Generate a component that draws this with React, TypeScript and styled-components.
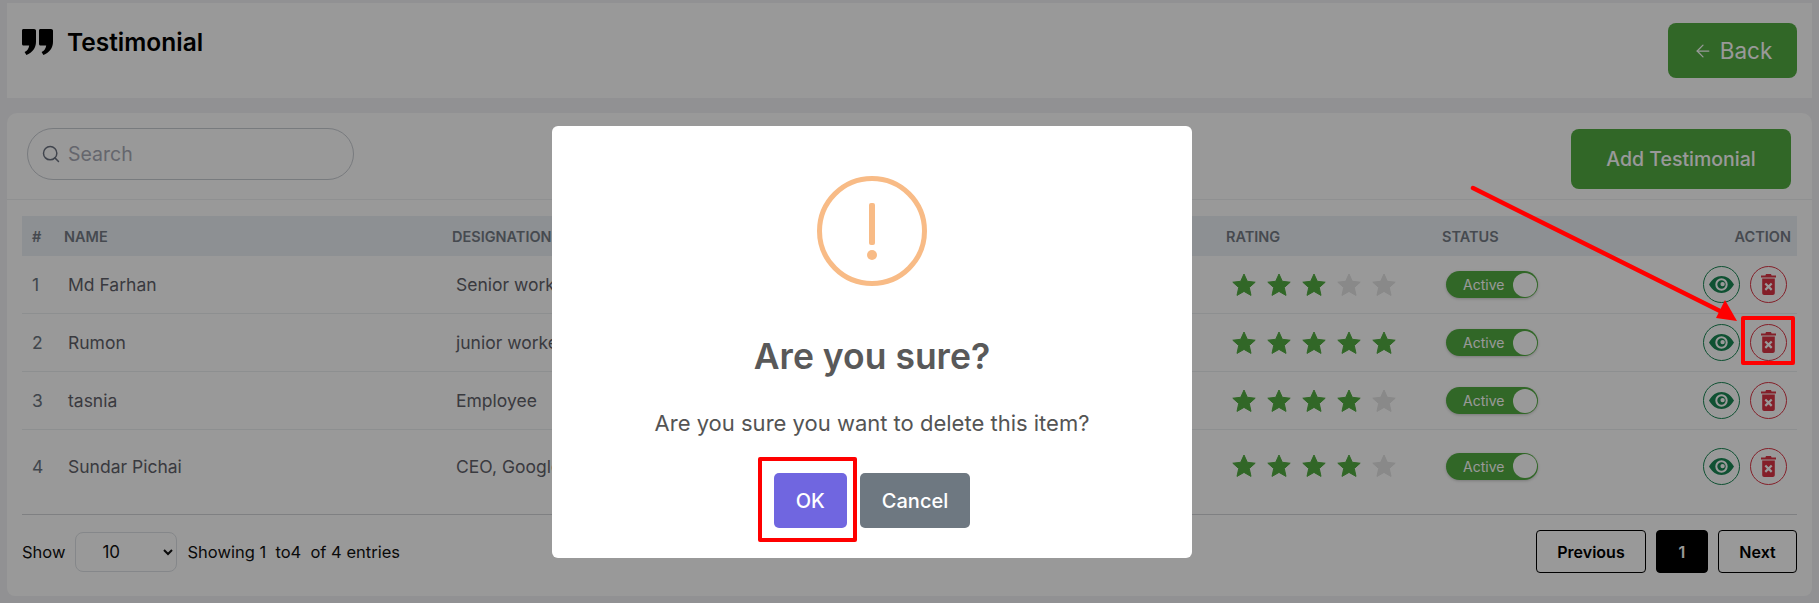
import styled, { createGlobalStyle } from 'styled-components';
import { ArrowLeft, Search } from 'lucide-react';

const GlobalStyle = createGlobalStyle`
  html, body {
    margin: 0;
    padding: 0;
    height: 603px;
    overflow: hidden;
    background: #f2f2f5;
    font-family: Inter, "Liberation Sans", sans-serif;
  }
  * { box-sizing: border-box; }
`;

const Page = styled.div`
  width: 1819px;
  height: 603px;
  padding: 3px 7px 0;
  display: flex;
  flex-direction: column;
  gap: 15px;
`;

const HeaderCard = styled.div`
  height: 95px;
  background: #fff;
  padding: 20px 15px 0 15px;
  display: flex;
  justify-content: space-between;
  align-items: flex-start;
`;

const TitleRow = styled.div`
  display: flex;
  align-items: center;
  gap: 14px;
  padding-top: 6px;
`;

const PageTitle = styled.h1`
  margin: 0;
  font-size: 24.5px;
  line-height: 26px;
  font-weight: 600;
  color: #000;
`;

const GreenButton = styled.button`
  border: 0;
  border-radius: 8px;
  background: #52ac41;
  color: #fff;
  font-family: inherit;
  display: flex;
  align-items: center;
  justify-content: center;
`;

const BackButton = styled(GreenButton)`
  width: 129px;
  height: 55px;
  gap: 7px;
  font-size: 22.5px;
  font-weight: 400;
`;

const TableCard = styled.div`
  height: 483px;
  background: #fff;
  border-radius: 10px 10px 8px 8px;
  display: flex;
  flex-direction: column;
`;

const Toolbar = styled.div`
  height: 87px;
  flex: none;
  padding: 15px 21px 0 20px;
  display: flex;
  justify-content: space-between;
  align-items: flex-start;
  border-bottom: 1px solid #eef0f2;
`;

const SearchBox = styled.label`
  width: 327px;
  height: 52px;
  border: 1px solid #c9cdd3;
  border-radius: 26px;
  display: flex;
  align-items: center;
  gap: 5px;
  padding-left: 13px;
  color: #6b7280;
`;

const SearchInput = styled.input`
  border: 0;
  outline: 0;
  background: transparent;
  flex: 1;
  min-width: 0;
  font-family: inherit;
  font-size: 19.5px;
  &::placeholder {
    color: #a8abb6;
  }
`;

const AddButton = styled(GreenButton)`
  width: 220px;
  height: 60px;
  margin-top: 1px;
  font-size: 19.5px;
  font-weight: 500;
`;

const TableWrap = styled.div`
  padding: 16px 15px 0;
`;

const columns = '42px 388px 774px 216px 180px 1fr';

const HeadRow = styled.div`
  display: grid;
  grid-template-columns: ${columns};
  height: 40px;
  align-items: center;
  background: #ebf0f5;
`;

const HeadCell = styled.div<{ $right?: boolean }>`
  font-size: 14.5px;
  font-weight: 600;
  color: #767c85;
  white-space: nowrap;
  text-align: ${(p) => (p.$right ? 'right' : 'left')};
  padding-right: ${(p) => (p.$right ? '6px' : 0)};
  &:first-child {
    padding-left: 10px;
  }
`;

const BodyRow = styled.div<{ $height: number; $dropBy?: number; $strong?: boolean }>`
  display: grid;
  grid-template-columns: ${columns};
  height: ${(p) => p.$height}px;
  padding-bottom: ${(p) => p.$dropBy ?? 0}px;
  align-items: center;
  border-bottom: 1px solid ${(p) => (p.$strong ? '#d4d6d9' : '#eceef1')};
`;

const IndexCell = styled.div`
  padding-left: 10px;
  font-size: 17.5px;
  color: #6c7580;
`;

const TextCell = styled.div`
  padding-left: 4px;
  font-size: 17.5px;
  color: #5f626a;
  white-space: nowrap;
`;

const Stars = styled.div`
  display: flex;
  gap: 11px;
  padding-left: 6px;
`;

const StarIcon = styled.svg<{ $on: boolean }>`
  width: 24px;
  height: 24px;
  fill: ${(p) => (p.$on ? '#52ac41' : '#e4e4e4')};
  stroke: ${(p) => (p.$on ? '#52ac41' : '#e4e4e4')};
  stroke-width: 1;
  stroke-linejoin: round;
`;

const Toggle = styled.div`
  margin-left: 4px;
  width: 92px;
  height: 27px;
  border-radius: 14px;
  background: #52ac41;
  color: #fff;
  font-size: 14px;
  display: flex;
  align-items: center;
  justify-content: space-between;
  padding: 0 1.5px 0 17px;
  box-shadow: 0 1px 3px rgba(0, 0, 0, 0.2);
`;

const Knob = styled.span`
  width: 24px;
  height: 24px;
  border-radius: 50%;
  background: #fff;
`;

const Actions = styled.div`
  display: flex;
  justify-content: flex-end;
  gap: 10.5px;
  padding-right: 10px;
`;

const RoundAction = styled.button<{ $color: string }>`
  width: 37px;
  height: 37px;
  padding: 0;
  border-radius: 50%;
  background: transparent;
  border: 1px solid ${(p) => p.$color};
  color: ${(p) => p.$color};
  display: flex;
  align-items: center;
  justify-content: center;
`;

const Footer = styled.div`
  padding: 15px 15px 0;
  display: flex;
  justify-content: space-between;
  align-items: center;
`;

const Entries = styled.div`
  display: flex;
  align-items: center;
  gap: 10px;
  font-size: 16.5px;
  color: #111;
  white-space: pre;
`;

const PageSizeSelect = styled.select`
  width: 102px;
  height: 40px;
  padding: 0 16px 0 22px;
  border: 1px solid #dee2e6;
  border-radius: 8px;
  background: transparent;
  font-family: inherit;
  font-size: 17px;
  color: #111;
`;

const Pagination = styled.div`
  display: flex;
  gap: 10px;
`;

const PageButton = styled.button<{ $active?: boolean; $width: number }>`
  width: ${(p) => p.$width}px;
  height: 43px;
  border: 1px solid #000;
  border-radius: 4px;
  background: ${(p) => (p.$active ? '#000' : 'transparent')};
  color: ${(p) => (p.$active ? '#fff' : '#000')};
  font-family: inherit;
  font-size: 16px;
  font-weight: 600;
`;

const Overlay = styled.div`
  position: fixed;
  inset: 0;
  background: rgba(0, 0, 0, 0.4);
`;

const Modal = styled.div`
  position: absolute;
  left: 552px;
  top: 126px;
  width: 640px;
  height: 432px;
  background: #fff;
  border-radius: 6px;
  display: flex;
  flex-direction: column;
  align-items: center;
  padding-top: 50px;
`;

const WarningIcon = styled.div`
  width: 110px;
  height: 110px;
  border-radius: 50%;
  border: 5px solid #f8bb86;
  display: flex;
  flex-direction: column;
  align-items: center;
  padding-top: 22px;
`;

const WarningStem = styled.span`
  width: 6px;
  height: 42px;
  background: #f8bb86;
  border-radius: 2px;
`;

const WarningDot = styled.span`
  width: 10px;
  height: 10px;
  margin-top: 5px;
  border-radius: 50%;
  background: #f8bb86;
`;

const ModalTitle = styled.h2`
  margin: 48px 0 0;
  font-size: 35.5px;
  line-height: 45px;
  font-weight: 600;
  color: #595959;
`;

const ModalText = styled.p`
  margin: 30px 0 0;
  font-size: 22px;
  line-height: 28px;
  font-weight: 400;
  color: #545454;
`;

const ModalActions = styled.div`
  margin-top: 36px;
  display: flex;
  gap: 13px;
`;

const ModalButton = styled.button<{ $color: string }>`
  height: 55px;
  padding: 0 22px;
  border: 0;
  border-radius: 5px;
  background: ${(p) => p.$color};
  color: #fff;
  font-family: inherit;
  font-size: 20px;
  font-weight: 500;
`;

const Callout = styled.div<{ $x: number; $y: number; $w: number; $h: number }>`
  position: absolute;
  left: ${(p) => p.$x}px;
  top: ${(p) => p.$y}px;
  width: ${(p) => p.$w}px;
  height: ${(p) => p.$h}px;
  border: 4px solid #f00;
  border-radius: 2px;
`;

const ArrowLayer = styled.svg`
  position: absolute;
  left: 0;
  top: 0;
  width: 1819px;
  height: 603px;
`;

const QuoteIcon = () => (
  <svg width="31" height="26" viewBox="0 0 31 26" fill="#000">
    <path d="M1.500 0h10.600c1 0 1.900.8 1.900 1.800v11c0 6-3.400 10.800-9.600 13.200L2.600 23c2.600-1.300 4.300-3.600 4.600-6.600H1.500c-.9 0-1.500-.7-1.500-1.500V1.600C0 .7.6 0 1.500 0z" />
    <path d="M18.500 0h10.600c1 0 1.900.8 1.900 1.800v11c0 6-3.400 10.800-9.600 13.200L19.600 23c2.600-1.300 4.300-3.600 4.600-6.600h-5.700c-.9 0-1.500-.7-1.500-1.500V1.600C17 .7 17.600 0 18.500 0z" />
  </svg>
);

const EyeIcon = () => (
  <svg width="25" height="17" viewBox="0 0 25 17" fill="currentColor" fillRule="evenodd">
    <path d="M0 8.500C3.400 2.800 7.600 0 12.500 0S21.600 2.800 25 8.500C21.600 14.200 17.400 17 12.500 17S3.400 14.200 0 8.500zM12.500 2.300a6.200 6.200 0 1 0 0 12.400 6.200 6.200 0 0 0 0-12.400z" />
    <path d="M12.500 4.300a4.200 4.200 0 1 1 0 8.400 4.200 4.200 0 0 1 0-8.400zM13.600 5.900a2.200 2.200 0 1 0 0 4.400 2.200 2.200 0 0 0 0-4.400z" />
  </svg>
);

const TrashIcon = () => (
  <svg width="15" height="21" viewBox="0 0 15 21">
    <path fill="currentColor" d="M5 0h5l.6 1.500H15v2H0v-2h4.400zM1.200 4.500h12.600V19c0 1.100-.8 2-1.900 2H3.100c-1.100 0-1.900-.9-1.900-2z" />
    <path stroke="#fff" strokeWidth="2.200" d="M4.300 9.500l6.400 6.400M10.700 9.500l-6.400 6.400" />
  </svg>
);

const Star = ({ on }: { on: boolean }) => (
  <StarIcon $on={on} viewBox="0 0 24 24">
    <polygon points="12,1 15.300,8.300 23.200,9.200 17.300,14.500 19,22.400 12,18.400 5,22.400 6.700,14.500 0.800,9.200 8.700,8.300" />
  </StarIcon>
);

const testimonials = [
  { name: 'Md Farhan', role: 'Senior worker', rating: 3, height: 58 },
  { name: 'Rumon', role: 'junior worker', rating: 5, height: 58 },
  { name: 'tasnia', role: 'Employee', rating: 4, height: 58 },
  { name: 'Sundar Pichai', role: 'CEO, Google', rating: 4, height: 85, dropBy: 12, strong: true },
];

export default function App() {
  return (
    <>
      <GlobalStyle />
      <Page>
        <HeaderCard>
          <TitleRow>
            <QuoteIcon />
            <PageTitle>Testimonial</PageTitle>
          </TitleRow>
          <BackButton>
            <ArrowLeft size={20} strokeWidth={1.5} />
            Back
          </BackButton>
        </HeaderCard>

        <TableCard>
          <Toolbar>
            <SearchBox>
              <Search size={20} strokeWidth={1.75} />
              <SearchInput placeholder="Search" />
            </SearchBox>
            <AddButton>Add Testimonial</AddButton>
          </Toolbar>

          <TableWrap>
            <HeadRow>
              <HeadCell>#</HeadCell>
              <HeadCell>NAME</HeadCell>
              <HeadCell>DESIGNATION</HeadCell>
              <HeadCell>RATING</HeadCell>
              <HeadCell>STATUS</HeadCell>
              <HeadCell $right>ACTION</HeadCell>
            </HeadRow>
            {testimonials.map((item, idx) => (
              <BodyRow key={item.name} $height={item.height} $dropBy={item.dropBy} $strong={item.strong}>
                <IndexCell>{idx + 1}</IndexCell>
                <TextCell>{item.name}</TextCell>
                <TextCell>{item.role}</TextCell>
                <Stars>
                  {[1, 2, 3, 4, 5].map((n) => (
                    <Star key={n} on={n <= item.rating} />
                  ))}
                </Stars>
                <Toggle>
                  Active
                  <Knob />
                </Toggle>
                <Actions>
                  <RoundAction $color="#198754">
                    <EyeIcon />
                  </RoundAction>
                  <RoundAction $color="#dc3545">
                    <TrashIcon />
                  </RoundAction>
                </Actions>
              </BodyRow>
            ))}
          </TableWrap>

          <Footer>
            <Entries>
              Show
              <PageSizeSelect defaultValue="10">
                <option>10</option>
                <option>25</option>
                <option>50</option>
              </PageSizeSelect>
              Showing 1  to4  of 4 entries
            </Entries>
            <Pagination>
              <PageButton $width={110}>Previous</PageButton>
              <PageButton $width={52} $active>1</PageButton>
              <PageButton $width={79}>Next</PageButton>
            </Pagination>
          </Footer>
        </TableCard>
      </Page>

      <Overlay>
        <Modal>
          <WarningIcon>
            <WarningStem />
            <WarningDot />
          </WarningIcon>
          <ModalTitle>Are you sure?</ModalTitle>
          <ModalText>Are you sure you want to delete this item?</ModalText>
          <ModalActions>
            <ModalButton $color="#7066e0">OK</ModalButton>
            <ModalButton $color="#6e7881">Cancel</ModalButton>
          </ModalActions>
        </Modal>

        <Callout $x={758} $y={457} $w={99} $h={85} />
        <Callout $x={1741} $y={316} $w={54} $h={49} />
        <ArrowLayer viewBox="0 0 1819 603">
          <line x1="1473" y1="188" x2="1722" y2="312" stroke="#f00" strokeWidth="4.500" strokeLinecap="round" />
          <polygon points="1737,321 1716,318 1725,300" fill="#f00" />
        </ArrowLayer>
      </Overlay>
    </>
  );
}
